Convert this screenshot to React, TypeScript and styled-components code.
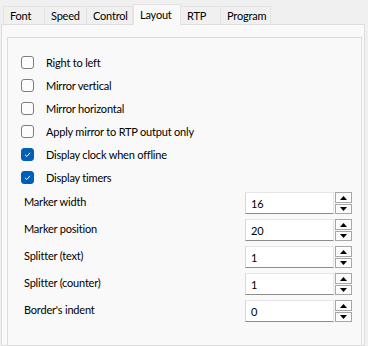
import styled, { createGlobalStyle } from 'styled-components';

const GlobalStyle = createGlobalStyle`
	html, body {
		margin: 0;
		padding: 0;
		background: #f0f0f0;
	}
`;

const Window = styled.div`
	width: 368px;
	height: 346px;
	overflow: hidden;
	background: #f0f0f0;
	font-family: Lato, 'Liberation Sans', Arial, sans-serif;
	font-size: 11px;
	letter-spacing: -0.2px;
	color: #000;
	display: flex;
	flex-direction: column;
`;

const TabStrip = styled.div`
	display: flex;
	align-items: flex-end;
	height: 24px;
	padding-left: 3px;
	box-sizing: border-box;
	position: relative;
	z-index: 1;
`;

interface TabProps {
	$width: number;
	$active?: boolean;
}

const Tab = styled.div<TabProps>`
	box-sizing: border-box;
	width: ${(p) => p.$width}px;
	height: ${(p) => (p.$active ? 21 : 18)}px;
	margin-bottom: ${(p) => (p.$active ? -1 : 0)}px;
	margin-left: ${(p) => (p.$active ? 1 : 0)}px;
	padding-left: 6px;
	padding-bottom: ${(p) => (p.$active ? 2 : 0)}px;
	display: flex;
	align-items: center;
	background: ${(p) => (p.$active ? '#f9f9f9' : '#f0f0f0')};
	border: 1px solid #e3e3e3;
	border-bottom: none;
	margin-right: -1px;
	white-space: nowrap;
`;

const Panel = styled.div`
	flex: 1;
	margin-left: 1px;
	width: 364px;
	box-sizing: border-box;
	background: #f9f9f9;
	border: 1px solid #dedede;
	padding: 12px 2px 0 5px;
	display: flex;
`;

const Group = styled.div`
	flex: 1;
	border: 1px solid #dcdcdc;
	border-bottom: none;
	padding: 13px 0 0 13px;
`;

const CheckList = styled.div`
	display: flex;
	flex-direction: column;
`;

const CheckRow = styled.label`
	display: flex;
	align-items: center;
	height: 23px;
	gap: 12px;
`;

const Box = styled.span<{ $checked?: boolean }>`
	box-sizing: border-box;
	width: 13px;
	height: 13px;
	border-radius: 3px;
	border: 1px solid ${(p) => (p.$checked ? '#005fb8' : '#7d7d7d')};
	background: ${(p) => (p.$checked ? '#005fb8' : '#fcfcfc')};
	display: flex;
	align-items: center;
	justify-content: center;
`;

const SpinList = styled.div`
	display: flex;
	flex-direction: column;
	gap: 5px;
	padding: 3px 0 0 3px;
`;

const SpinRow = styled.div`
	display: flex;
	align-items: center;
	height: 22px;
`;

const SpinLabel = styled.div`
	width: 221px;
	margin-top: -3px;
`;

const Edit = styled.div`
	box-sizing: border-box;
	width: 89px;
	height: 22px;
	background: #fff;
	border: 1px solid #e6e6e6;
	border-bottom: 1px solid #8c8c8c;
	border-left-color: #d8d8d8;
	padding-left: 5px;
	display: flex;
	align-items: center;
`;

const Spinner = styled.div`
	display: flex;
	flex-direction: column;
	gap: 1px;
	margin-left: 1px;
	height: 22px;
`;

const SpinButton = styled.div`
	box-sizing: border-box;
	width: 17px;
	height: 11px;
	border: 1px solid #a6a6a6;
	background: #fbfbfb;
	box-shadow: inset 0 0 0 1px #ffffff;
	display: flex;
	align-items: center;
	justify-content: center;
	&:last-child {
		height: 10px;
	}
`;

const Check = () => (
	<svg width="9" height="9" viewBox="0 0 9 9">
		<polyline points="2,4.8 3.8,6.5 7,2.8" fill="none" stroke="#fff" strokeWidth="1" />
	</svg>
);

const Arrow = ({ up }: { up?: boolean }) => (
	<svg width="7" height="4" viewBox="0 0 7 4">
		<polygon points={up ? '3.5,0 7,4 0,4' : '0,0 7,0 3.5,4'} fill="#000" />
	</svg>
);

const tabs = [
	{ name: 'Font', width: 42 },
	{ name: 'Speed', width: 43 },
	{ name: 'Control', width: 47 },
	{ name: 'Layout', width: 48, active: true },
	{ name: 'RTP', width: 41 },
	{ name: 'Program', width: 51 },
];

const checks = [
	{ label: 'Right to left', checked: false },
	{ label: 'Mirror vertical', checked: false },
	{ label: 'Mirror horizontal', checked: false },
	{ label: 'Apply mirror to RTP output only', checked: false },
	{ label: 'Display clock when offline', checked: true },
	{ label: 'Display timers', checked: true },
];

const spins = [
	{ label: 'Marker width', value: 16 },
	{ label: 'Marker position', value: 20 },
	{ label: 'Splitter (text)', value: 1 },
	{ label: 'Splitter (counter)', value: 1 },
	{ label: "Border's indent", value: 0 },
];

const App = () => {
	return (
		<Window>
			<GlobalStyle />
			<TabStrip>
				{tabs.map((t) => (
					<Tab key={t.name} $width={t.width} $active={t.active}>
						{t.name}
					</Tab>
				))}
			</TabStrip>
			<Panel>
				<Group>
					<CheckList>
						{checks.map((c) => (
							<CheckRow key={c.label}>
								<Box $checked={c.checked}>{c.checked ? <Check /> : null}</Box>
								{c.label}
							</CheckRow>
						))}
					</CheckList>
					<SpinList>
						{spins.map((s) => (
							<SpinRow key={s.label}>
								<SpinLabel>{s.label}</SpinLabel>
								<Edit>{s.value}</Edit>
								<Spinner>
									<SpinButton>
										<Arrow up />
									</SpinButton>
									<SpinButton>
										<Arrow />
									</SpinButton>
								</Spinner>
							</SpinRow>
						))}
					</SpinList>
				</Group>
			</Panel>
		</Window>
	);
};

export default App;
